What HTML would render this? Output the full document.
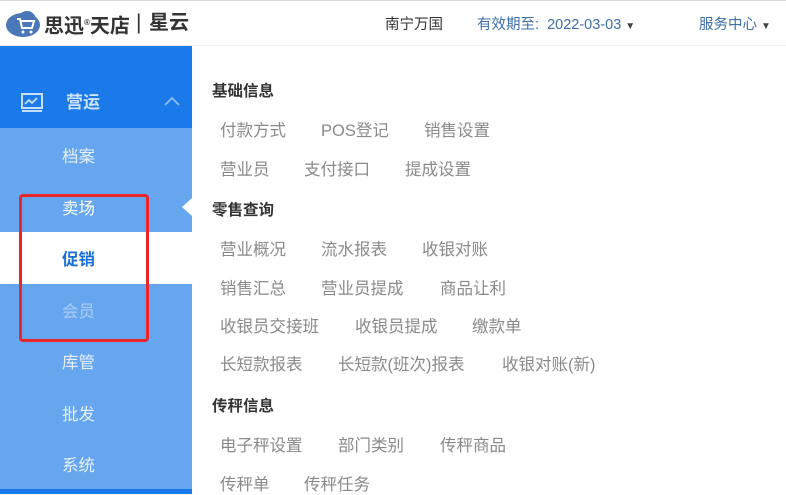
<!DOCTYPE html>
<html><head><meta charset="utf-8"><style>
*{margin:0;padding:0;box-sizing:border-box}
body{width:786px;height:494px;overflow:hidden;background:#fff;font-family:"Liberation Sans","Noto Sans CJK SC",sans-serif;position:relative}
.a{position:absolute;white-space:nowrap;line-height:20px}
.hdr{position:absolute;left:0;top:0;width:786px;height:46px;border-top:1px solid #d8d8d8;border-bottom:1px solid #eee;background:#fff}
.side{position:absolute;left:0;top:46px;width:192px;height:448px;background:#66a6ef}
.sidetop{position:absolute;left:0;top:46px;width:192px;height:82px;background:#1a7ae9}
.si{position:absolute;left:62px;font-size:16.5px;color:#e6f0fc;line-height:20px}
.t{font-size:15.5px;font-weight:bold;color:#333}
.i{font-size:16.5px;color:#8a8a8a}
</style></head><body>
<div class="hdr">
 <svg style="position:absolute;left:5px;top:9px" width="36" height="28" viewBox="0 0 36 28"><ellipse cx="18" cy="15" rx="17" ry="12" fill="#4a77b8"/><circle cx="22" cy="10" r="9" fill="#4a77b8"/><path d="M12 9h3l2 9h10l2-7H16" stroke="#fff" stroke-width="2" fill="none"/><circle cx="18" cy="22" r="1.5" fill="#fff"/><circle cx="26" cy="22" r="1.5" fill="#fff"/></svg>
 <div class="a" style="left:44px;top:12px;font-size:20px;font-weight:bold;color:#333">思迅<sup style="font-size:8px">®</sup>天店</div>
 <div class="a" style="left:136px;top:12px;font-size:21px;color:#333">|</div>
 <div class="a" style="left:149px;top:12px;font-size:20px;font-weight:bold;color:#333">星云</div>
 <div class="a" style="left:385px;top:14px;font-size:14.5px;color:#333">南宁万国</div>
 <div class="a" style="left:477px;top:14px;font-size:14.5px;color:#3d6ea8">有效期至:&nbsp; 2022-03-03 <span style="font-size:10px;color:#444">▼</span></div>
 <div class="a" style="left:699px;top:14px;font-size:14.5px;color:#3d6ea8">服务中心 <span style="font-size:10px;color:#444">▼</span></div>
</div>
<div class="side"></div>
<div class="sidetop"></div>
<div style="position:absolute;left:0;top:232px;width:192px;height:52px;background:#fff"></div>
<div style="position:absolute;left:0;top:489px;width:192px;height:5px;background:#1a7ae9"></div>
<svg style="position:absolute;left:21px;top:93px" width="22" height="20" viewBox="0 0 22 20"><rect x="1" y="1" width="20" height="14" fill="none" stroke="#c9defa" stroke-width="2"/><path d="M4 11l4-4 3 3 5-5" stroke="#c9defa" stroke-width="1.8" fill="none"/><rect x="1" y="17" width="20" height="2" fill="#c9defa"/></svg>
<div class="a" style="left:66px;top:93px;font-size:17px;font-weight:bold;color:#cfe2fb">营运</div>
<svg style="position:absolute;left:164px;top:96px" width="16" height="10"><path d="M1 9l7-7 7 7" stroke="#8fbaf2" stroke-width="1.8" fill="none"/></svg>
<div class="si" style="top:147px">档案</div>
<div class="si" style="top:199px;color:#fff">卖场</div>
<div class="si" style="top:250px;color:#1a6ed8;font-weight:bold">促销</div>
<div class="si" style="top:302px;color:#a9cdf7">会员</div>
<div class="si" style="top:353px">库管</div>
<div class="si" style="top:405px">批发</div>
<div class="si" style="top:456px">系统</div>
<svg style="position:absolute;left:182px;top:198px" width="10" height="18"><path d="M10 0L0 9l10 9z" fill="#fff"/></svg>
<div style="position:absolute;left:19px;top:194px;width:130px;height:148px;border:3px solid #e8262a;border-radius:4px"></div>

<div class="a t" style="left:212px;top:82px">基础信息</div>
<div class="a i" style="left:220px;top:121px">付款方式</div><div class="a i" style="left:321px;top:121px">POS登记</div><div class="a i" style="left:424px;top:121px">销售设置</div>
<div class="a i" style="left:220px;top:160px">营业员</div><div class="a i" style="left:304px;top:160px">支付接口</div><div class="a i" style="left:405px;top:160px">提成设置</div>
<div class="a t" style="left:212px;top:201px">零售查询</div>
<div class="a i" style="left:220px;top:240px">营业概况</div><div class="a i" style="left:321px;top:240px">流水报表</div><div class="a i" style="left:422px;top:240px">收银对账</div>
<div class="a i" style="left:220px;top:279px">销售汇总</div><div class="a i" style="left:321px;top:279px">营业员提成</div><div class="a i" style="left:440px;top:279px">商品让利</div>
<div class="a i" style="left:220px;top:317px">收银员交接班</div><div class="a i" style="left:355px;top:317px">收银员提成</div><div class="a i" style="left:472px;top:317px">缴款单</div>
<div class="a i" style="left:220px;top:355px">长短款报表</div><div class="a i" style="left:338px;top:355px">长短款(班次)报表</div><div class="a i" style="left:502px;top:355px">收银对账(新)</div>
<div class="a t" style="left:212px;top:397px">传秤信息</div>
<div class="a i" style="left:220px;top:436px">电子秤设置</div><div class="a i" style="left:338px;top:436px">部门类别</div><div class="a i" style="left:440px;top:436px">传秤商品</div>
<div class="a i" style="left:220px;top:475px">传秤单</div><div class="a i" style="left:304px;top:475px">传秤任务</div>
</body></html>
